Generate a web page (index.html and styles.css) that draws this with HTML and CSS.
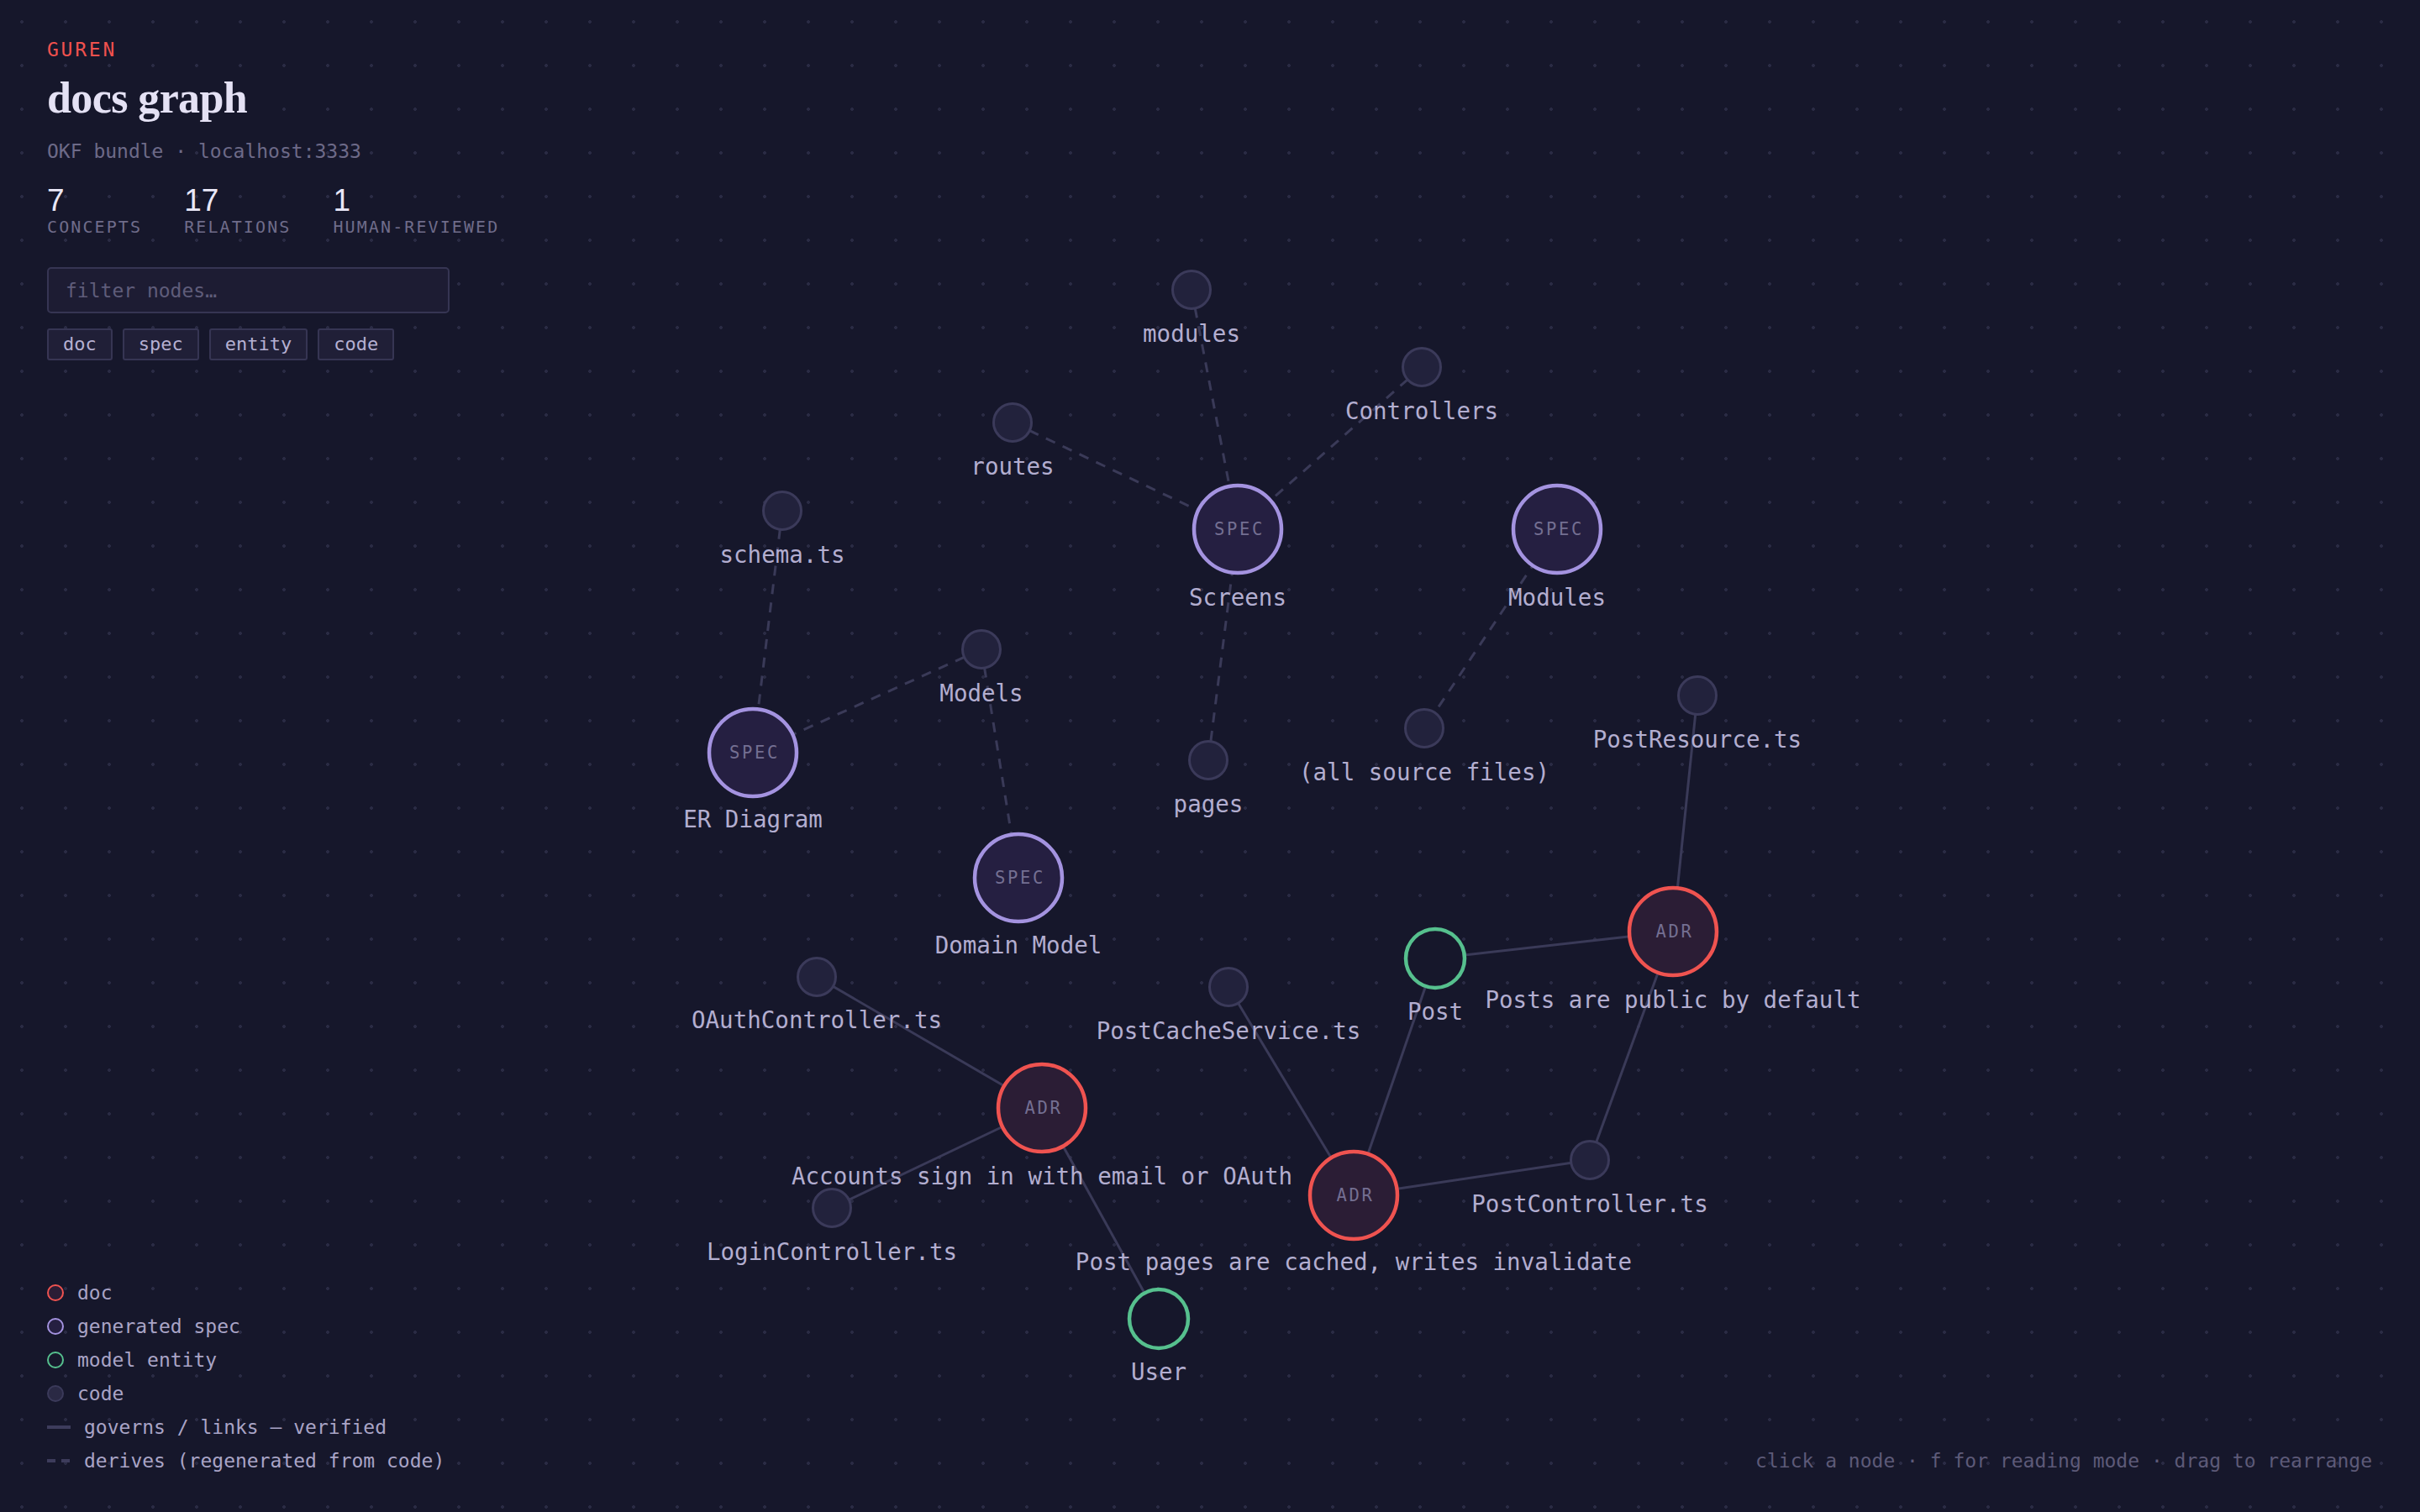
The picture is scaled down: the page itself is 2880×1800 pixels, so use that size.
FILE: index.html
```html
<!DOCTYPE html>
<html lang="en">
<head>
<meta charset="utf-8">
<title>docs graph</title>
<link rel="stylesheet" href="styles.css">
</head>
<body>
<svg class="graph" width="2880" height="1800" viewBox="0 0 2880 1800" xmlns="http://www.w3.org/2000/svg">
  <g class="edges derive">
    <line x1="1418" y1="345" x2="1473" y2="630"/>
    <line x1="1692" y1="437" x2="1473" y2="630"/>
    <line x1="1205" y1="503" x2="1473" y2="630"/>
    <line x1="1473" y1="630" x2="1438" y2="905"/>
    <line x1="931" y1="608" x2="896" y2="896"/>
    <line x1="1168" y1="773" x2="896" y2="896"/>
    <line x1="1168" y1="773" x2="1212" y2="1045"/>
    <line x1="1853" y1="630" x2="1695" y2="867"/>
  </g>
  <g class="edges govern">
    <line x1="2020" y1="828" x2="1991" y2="1109"/>
    <line x1="1708" y1="1141" x2="1991" y2="1109"/>
    <line x1="1991" y1="1109" x2="1892" y2="1381"/>
    <line x1="1892" y1="1381" x2="1611" y2="1423"/>
    <line x1="1708" y1="1141" x2="1611" y2="1423"/>
    <line x1="1462" y1="1175" x2="1611" y2="1423"/>
    <line x1="972" y1="1163" x2="1240" y2="1319"/>
    <line x1="1240" y1="1319" x2="990" y2="1438"/>
    <line x1="1240" y1="1319" x2="1379" y2="1570"/>
  </g>

  <g class="nodes">
    <circle class="n-code" cx="1418" cy="345" r="22.5"/>
    <circle class="n-code" cx="1692" cy="437" r="22.5"/>
    <circle class="n-code" cx="1205" cy="503" r="22.5"/>
    <circle class="n-code" cx="931" cy="608" r="22.5"/>
    <circle class="n-code" cx="1168" cy="773" r="22.5"/>
    <circle class="n-code" cx="1438" cy="905" r="22.5"/>
    <circle class="n-code" cx="1695" cy="867" r="22.5"/>
    <circle class="n-code" cx="2020" cy="828" r="22.5"/>
    <circle class="n-code" cx="972" cy="1163" r="22.5"/>
    <circle class="n-code" cx="1462" cy="1175" r="22.5"/>
    <circle class="n-code" cx="1892" cy="1381" r="22.5"/>
    <circle class="n-code" cx="990" cy="1438" r="22.5"/>

    <circle class="n-spec" cx="1473" cy="630" r="52"/>
    <circle class="n-spec" cx="1853" cy="630" r="52"/>
    <circle class="n-spec" cx="896" cy="896" r="52"/>
    <circle class="n-spec" cx="1212" cy="1045" r="52"/>

    <circle class="n-doc" cx="1991" cy="1109" r="52"/>
    <circle class="n-doc" cx="1240" cy="1319" r="52"/>
    <circle class="n-doc" cx="1611" cy="1423" r="52"/>

    <circle class="n-entity" cx="1708" cy="1141" r="35"/>
    <circle class="n-entity" cx="1379" cy="1570" r="35"/>
  </g>

  <g class="kinds">
    <text x="1475" y="637">SPEC</text>
    <text x="1855" y="637">SPEC</text>
    <text x="898" y="903">SPEC</text>
    <text x="1214" y="1052">SPEC</text>
    <text x="1993" y="1116">ADR</text>
    <text x="1242" y="1326">ADR</text>
    <text x="1613" y="1430">ADR</text>
  </g>

  <g class="labels">
    <text x="1418" y="407">modules</text>
    <text x="1692" y="499">Controllers</text>
    <text x="1205" y="565">routes</text>
    <text x="931" y="670">schema.ts</text>
    <text x="1473" y="721">Screens</text>
    <text x="1853" y="721">Modules</text>
    <text x="1168" y="835">Models</text>
    <text x="896" y="985">ER Diagram</text>
    <text x="1438" y="967">pages</text>
    <text x="1695" y="929">(all source files)</text>
    <text x="2020" y="890">PostResource.ts</text>
    <text x="1212" y="1135">Domain Model</text>
    <text x="1991" y="1200">Posts are public by default</text>
    <text x="1708" y="1214">Post</text>
    <text x="972" y="1224">OAuthController.ts</text>
    <text x="1462" y="1237">PostCacheService.ts</text>
    <text x="1240" y="1410">Accounts sign in with email or OAuth</text>
    <text x="1611" y="1512">Post pages are cached, writes invalidate</text>
    <text x="1892" y="1443">PostController.ts</text>
    <text x="990" y="1500">LoginController.ts</text>
    <text x="1379" y="1643">User</text>
  </g>
</svg>

<div class="hud">
  <aside class="side">
    <header class="panel">
      <div class="brand">GUREN</div>
      <h1 class="title">docs graph</h1>
      <p class="sub">OKF bundle · localhost:3333</p>
      <div class="stats">
        <div class="stat"><span class="num">7</span><span class="cap">CONCEPTS</span></div>
        <div class="stat"><span class="num">17</span><span class="cap">RELATIONS</span></div>
        <div class="stat"><span class="num">1</span><span class="cap">HUMAN-REVIEWED</span></div>
      </div>
      <input class="filter" type="text" placeholder="filter nodes…">
      <div class="chips">
        <span class="chip">doc</span>
        <span class="chip">spec</span>
        <span class="chip">entity</span>
        <span class="chip">code</span>
      </div>
    </header>

    <ul class="legend">
      <li class="lg"><span class="dot dot-doc"></span>doc</li>
      <li class="lg"><span class="dot dot-spec"></span>generated spec</li>
      <li class="lg"><span class="dot dot-entity"></span>model entity</li>
      <li class="lg"><span class="dot dot-code"></span>code</li>
      <li class="lg"><span class="swatch swatch-solid"></span>governs / links — verified</li>
      <li class="lg"><span class="swatch swatch-dash"></span>derives (regenerated from code)</li>
    </ul>
  </aside>

  <p class="hint">click a node · f for reading mode · drag to rearrange</p>
</div>
</body>
</html>
```

FILE: styles.css
```css
* { box-sizing: border-box; }

html, body {
  margin: 0;
  padding: 0;
}

body {
  width: 2880px;
  height: 1800px;
  overflow: hidden;
  position: relative;
  background-color: #16172b;
  background-image: radial-gradient(circle, #2a2b44 1.6px, transparent 2.2px);
  background-size: 52px 52px;
  background-position: 0 0;
  font-family: "DejaVu Sans Mono", monospace;
  color: #b3aed0;
}

/* graph canvas */
.graph {
  position: absolute;
  top: 0;
  left: 0;
  display: block;
}

.edges line {
  stroke: #3a3a58;
  stroke-width: 3;
  fill: none;
}

.edges.derive line {
  stroke-dasharray: 12 10;
}

.n-code {
  fill: #22223c;
  stroke: #3b3a5a;
  stroke-width: 3;
}

.n-spec {
  fill: #251f41;
  stroke: #a493e0;
  stroke-width: 4.5;
}

.n-doc {
  fill: #2b1d35;
  stroke: #ef5350;
  stroke-width: 4.5;
}

.n-entity {
  fill: #16172b;
  stroke: #56c08e;
  stroke-width: 4.5;
}

.kinds text {
  font-family: "DejaVu Sans Mono", monospace;
  font-size: 20.5px;
  letter-spacing: 2.6px;
  fill: #746f92;
  text-anchor: middle;
}

.labels text {
  font-family: "DejaVu Sans Mono", monospace;
  font-size: 27.5px;
  fill: #b3aed0;
  text-anchor: middle;
}

/* overlay */
.hud {
  position: relative;
  z-index: 1;
  height: 1800px;
  padding: 44px 57px 41px 56px;
  display: flex;
  justify-content: space-between;
  pointer-events: none;
}

.side {
  display: flex;
  flex-direction: column;
  justify-content: space-between;
}

.panel {
  display: flex;
  flex-direction: column;
  align-items: flex-start;
  pointer-events: auto;
}

.brand {
  font-size: 23px;
  line-height: 30px;
  letter-spacing: 0.12em;
  color: #f0514e;
}

.title {
  margin: 11px 0 0;
  font-family: "Liberation Serif", serif;
  font-weight: bold;
  font-size: 52px;
  line-height: 64px;
  letter-spacing: -0.6px;
  color: #e4e1f4;
}

.sub {
  margin: 15px 0 0;
  font-size: 23px;
  line-height: 32px;
  color: #6d6a88;
}

.stats {
  margin-top: 23px;
  display: flex;
  gap: 50px;
}

.stat {
  display: flex;
  flex-direction: column;
}

.num {
  font-family: "Liberation Sans", Arial, sans-serif;
  font-size: 37px;
  line-height: 40px;
  color: #e9e7f7;
}

.cap {
  font-size: 20px;
  line-height: 22px;
  letter-spacing: 2.1px;
  color: #6f6c8a;
}

.filter {
  margin-top: 37px;
  width: 479px;
  height: 55px;
  padding: 0 20px;
  border: 2px solid #363553;
  border-radius: 5px;
  background: #1d1c33;
  font-family: "DejaVu Sans Mono", monospace;
  font-size: 23px;
  color: #b3aed0;
  outline: none;
}

.filter::placeholder {
  color: #5f5c7a;
}

.chips {
  margin-top: 18px;
  display: flex;
  gap: 12px;
}

.chip {
  height: 38px;
  padding: 0 17px;
  border: 2px solid #363553;
  border-radius: 3px;
  background: #201f37;
  font-size: 22px;
  line-height: 34px;
  color: #b5b0d2;
}

.legend {
  list-style: none;
  margin: 0;
  padding: 0;
}

.lg {
  display: flex;
  align-items: center;
  gap: 16px;
  font-size: 23px;
  line-height: 40px;
  color: #a9a4c6;
}

.dot {
  width: 20px;
  height: 20px;
  border-radius: 50%;
  border: 2.5px solid;
  flex: none;
}

.dot-doc { border-color: #ef5350; background: #2b1d35; }
.dot-spec { border-color: #a493e0; background: #251f41; }
.dot-entity { border-color: #56c08e; background: transparent; }
.dot-code { border-color: #3b3a5a; background: #2a2944; }

.swatch {
  width: 28px;
  height: 4px;
  flex: none;
}

.swatch-solid { background: #3d3c5c; }
.swatch-dash {
  background: repeating-linear-gradient(90deg, #3d3c5c 0 10px, transparent 10px 17px);
}

.hint {
  align-self: flex-end;
  margin: 0;
  font-size: 23px;
  line-height: 40px;
  color: #5d5a78;
}
```
